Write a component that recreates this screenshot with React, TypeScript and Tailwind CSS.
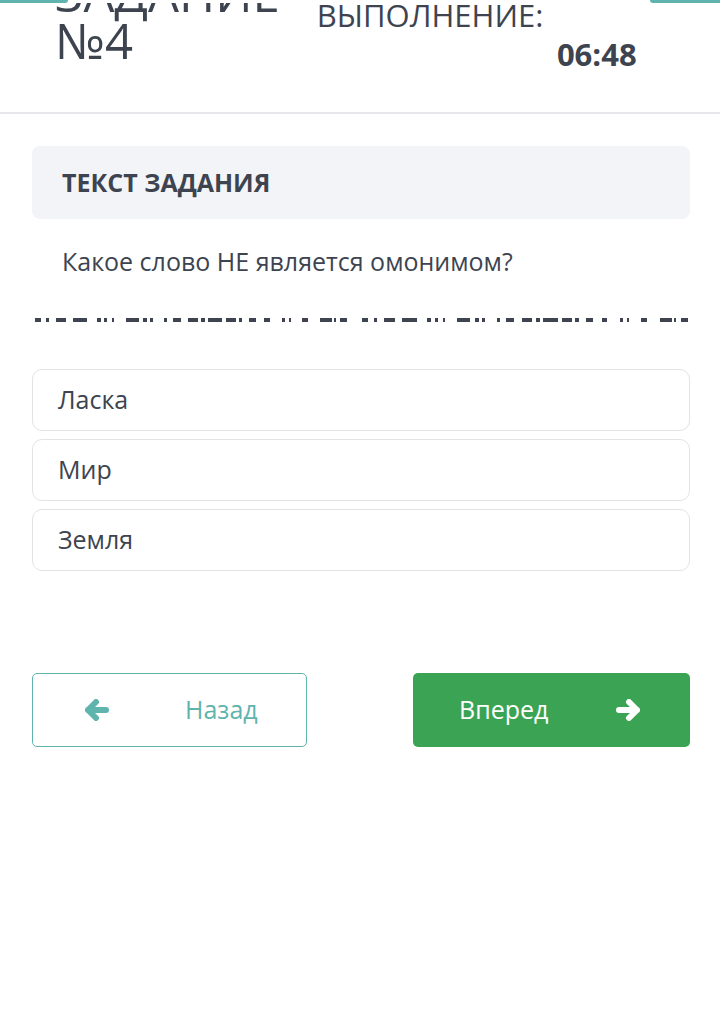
const dashPattern: [number, number][] = [
  [0, 6], [11, 3], [21, 10], [38, 14], [62, 4], [69, 3], [77, 2], [90, 13], [107, 4], [114, 3],
  [128, 3], [137, 8], [152, 10], [165, 4], [172, 14], [190, 10], [203, 3], [213, 7], [228, 5],
  [245, 3], [252, 2], [265, 6], [283, 12], [297, 2], [303, 7],
];

// the two runs of dashes are not quite the same width
const segments = [312, 326];

function DashRow() {
  return (
    <div className="flex gap-[15px] pl-[35px]">
      {segments.map((segW, seg) => (
        <div key={seg} className="relative h-[4px]" style={{ width: segW }}>
          {dashPattern.map(([left, w], i) => (
            <span
              key={i}
              className="absolute top-0 h-[4px] bg-[#3d4450]"
              style={{ left: (left * segW) / 310, width: (w * segW) / 310 }}
            />
          ))}
        </div>
      ))}
    </div>
  );
}

function Arrow({ dir }: { dir: 'left' | 'right' }) {
  return (
    <svg
      width="24"
      height="22"
      viewBox="0 0 24 22"
      fill="none"
      stroke="currentColor"
      strokeWidth="6"
      strokeLinecap="round"
      strokeLinejoin="round"
      className={dir === 'right' ? 'rotate-180' : ''}
    >
      <path d="M11 3L3 11L11 19M3 11H21" />
    </svg>
  );
}

const options = ['Ласка', 'Мир', 'Земля'];

export default function App() {
  return (
    <div className="min-h-[1026px] bg-white font-['Open_Sans',sans-serif] text-[#3d4450]">
      {/* page is scrolled: only the bottom edge of the top buttons shows */}
      <div className="flex h-[3px] justify-between">
        <div className="w-[68px] rounded-br-[6px] bg-[#5fb4ae]" />
        <div className="w-[70px] rounded-bl-[6px] bg-[#5fb4ae]" />
      </div>

      <header className="flex h-[111px] overflow-hidden border-b-2 border-[#e6e7ea]">
        <h1 className="-mt-[33px] pl-[55px] text-[49px] leading-[47px] font-normal">
          ЗАДАНИЕ
          <br />
          №4
        </h1>
        <div className="ml-[37px] flex w-[320px] flex-col">
          <div className="-mt-[8px] text-[31px] leading-[40px]">ВЫПОЛНЕНИЕ:</div>
          <div className="-mt-[1px] text-right text-[31px] leading-[40px] font-bold">06:48</div>
        </div>
      </header>

      <main className="pl-[32px] pr-[30px] pt-[32px]">
        <div className="flex h-[73px] items-center rounded-[8px] bg-[#f3f4f7] px-[30px]">
          <span className="text-[25px] font-bold">ТЕКСТ ЗАДАНИЯ</span>
        </div>
        <p className="mt-[25px] pl-[30px] text-[25px] leading-[34px]">
          Какое слово НЕ является омонимом?
        </p>
      </main>

      <div className="mt-[40px]">
        <DashRow />
      </div>

      <div className="mt-[47px] flex flex-col gap-[8px] pl-[32px] pr-[30px]">
        {options.map((o) => (
          <div
            key={o}
            className="flex h-[62px] items-center rounded-[10px] border border-[#e2e3e6] px-[25px] text-[25px]"
          >
            {o}
          </div>
        ))}
      </div>

      <div className="mt-[102px] flex justify-between pl-[32px] pr-[30px]">
        <button className="flex h-[74px] w-[275px] items-center gap-[76px] rounded-[5px] border border-[#5fb4ae] pl-[52px] text-[25px] text-[#5fb4ae]">
          <Arrow dir="left" />
          <span>Назад</span>
        </button>
        <button className="flex h-[74px] w-[277px] items-center gap-[68px] rounded-[5px] bg-[#3aa454] pl-[46px] text-[25px] text-white">
          <span>Вперед</span>
          <Arrow dir="right" />
        </button>
      </div>
    </div>
  );
}
